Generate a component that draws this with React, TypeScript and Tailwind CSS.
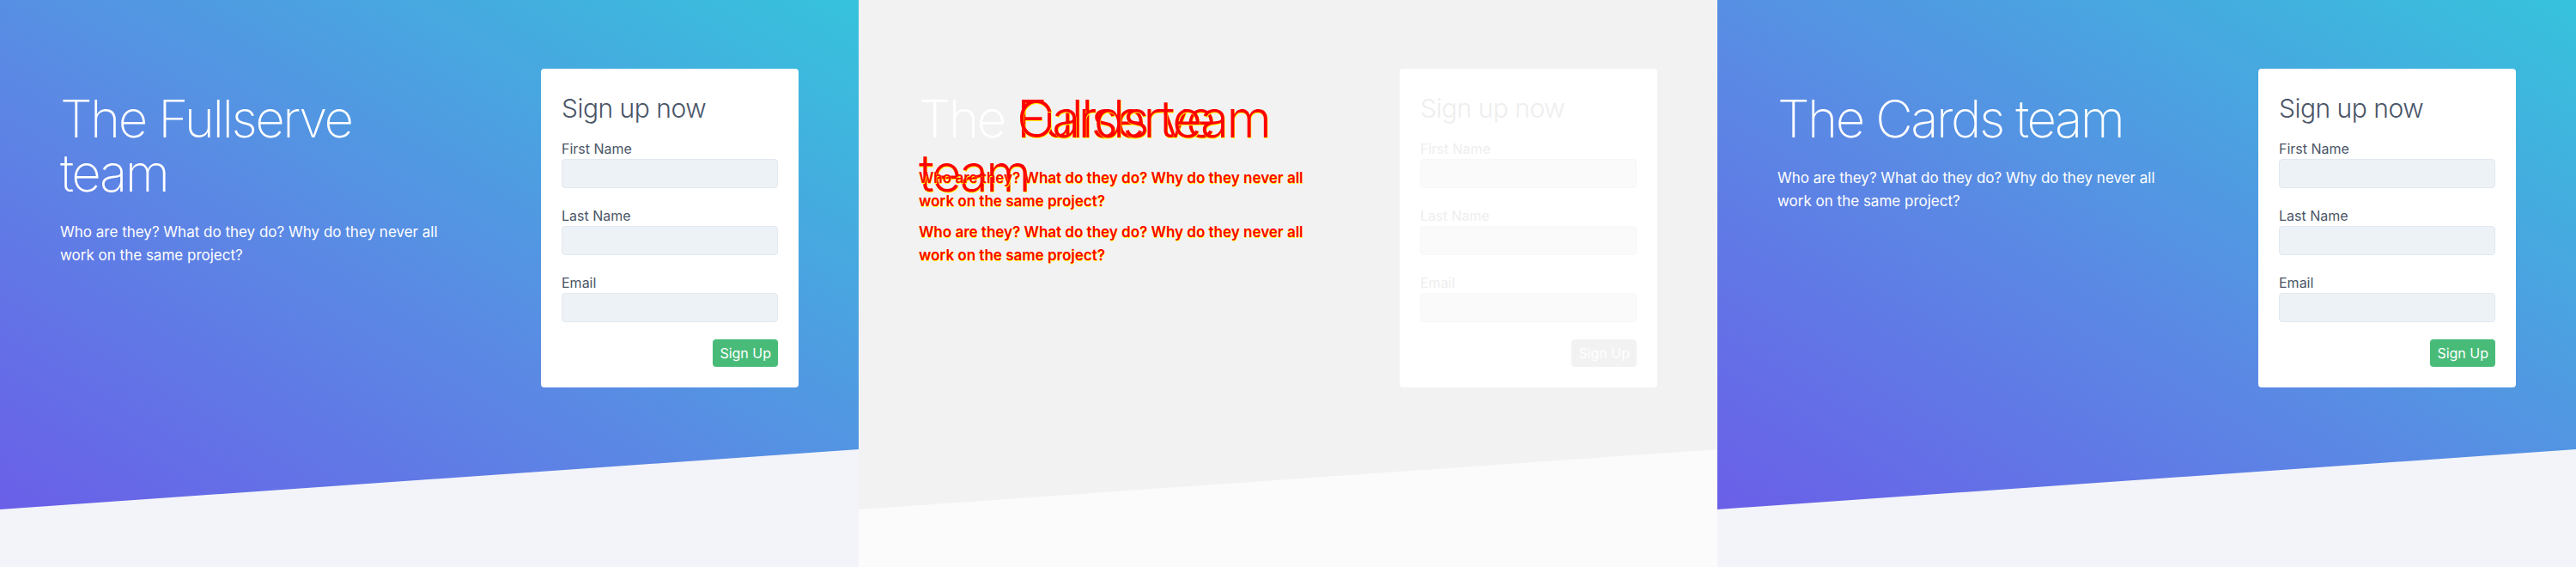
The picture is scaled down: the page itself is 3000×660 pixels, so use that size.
import React from 'react';

const PARAGRAPH = 'Who are they? What do they do? Why do they never all work on the same project?';
const FIELDS = ['First Name', 'Last Name', 'Email'];

// the "faded" card is how the diff view renders the unchanged form
function SignupCard({ faded = false }: { faded?: boolean }) {
  const textColor = faded ? 'text-[#eeeeee]' : 'text-[#4a5568]';
  const inputColor = faded ? 'bg-[#fafafa] border-[#f7f7f7]' : 'bg-[#edf2f7] border-[#e2e8f0]';

  return (
    <div className="w-[300px] shrink-0 rounded bg-white p-6">
      <h2 className={`mb-3 text-[30px] font-light leading-[45px] tracking-[-0.5px] ${textColor}`}>Sign up now</h2>
      {FIELDS.map((field) => (
        <div key={field} className="mb-5">
          <label className={`block text-base leading-6 ${textColor}`}>{field}</label>
          <input type="text" className={`block h-[34px] w-full rounded border ${inputColor}`} />
        </div>
      ))}
      <div className="flex justify-end">
        <button
          className={`rounded px-2 py-1 text-base leading-6 text-white ${faded ? 'bg-[#f2f2f2]' : 'bg-[#48bb78]'}`}
        >
          Sign Up
        </button>
      </div>
    </div>
  );
}

function Intro({ team }: { team: string }) {
  return (
    <div className="w-[460px] shrink-0 pt-[27px]">
      <h1 className="text-[60px] font-extralight leading-[63px] tracking-[-2.5px] text-white">The {team} team</h1>
      <p className="mt-6 text-[17px] leading-[27px] text-white">{PARAGRAPH}</p>
    </div>
  );
}

// diff overlay: old + new intro drawn in the same cell, changed pixels in red
function DiffIntro() {
  const changed = 'text-[#ff0000] [text-shadow:0.5px_0.5px_0_#ffff00]';
  return (
    <div className="grid w-[460px] shrink-0 pt-[27px]">
      {['Fullserve', 'Cards'].map((team) => (
        <div key={team} className="[grid-area:1/1]">
          <h1 className="text-[60px] font-extralight leading-[63px] tracking-[-2.5px] text-white">
            The <span className={`font-light ${changed}`}>{team} team</span>
          </h1>
          <p className={`mt-6 text-[17px] font-semibold leading-[27px] ${changed}`}>{PARAGRAPH}</p>
        </div>
      ))}
    </div>
  );
}

function Panel({ diff = false, children }: { diff?: boolean; children: React.ReactNode }) {
  return (
    <div className={`h-[660px] w-[1000px] shrink-0 ${diff ? 'bg-[#fbfbfb]' : 'bg-[#f3f4f9]'}`}>
      <div
        className={`h-[593px] [clip-path:polygon(0_0,100%_0,100%_523px,0_100%)] ${
          diff ? 'bg-[#f2f2f2]' : 'bg-[linear-gradient(to_top_right,#6a5fe8,#5a8ae4_45%,#36c3dc)]'
        }`}
      >
        <div className="flex justify-between px-[70px] pt-20">{children}</div>
      </div>
    </div>
  );
}

export default function App() {
  return (
    <div className="flex w-[3000px] font-['Inter',sans-serif]">
      <Panel>
        <Intro team="Fullserve" />
        <SignupCard />
      </Panel>
      <Panel diff>
        <DiffIntro />
        <SignupCard faded />
      </Panel>
      <Panel>
        <Intro team="Cards" />
        <SignupCard />
      </Panel>
    </div>
  );
}
